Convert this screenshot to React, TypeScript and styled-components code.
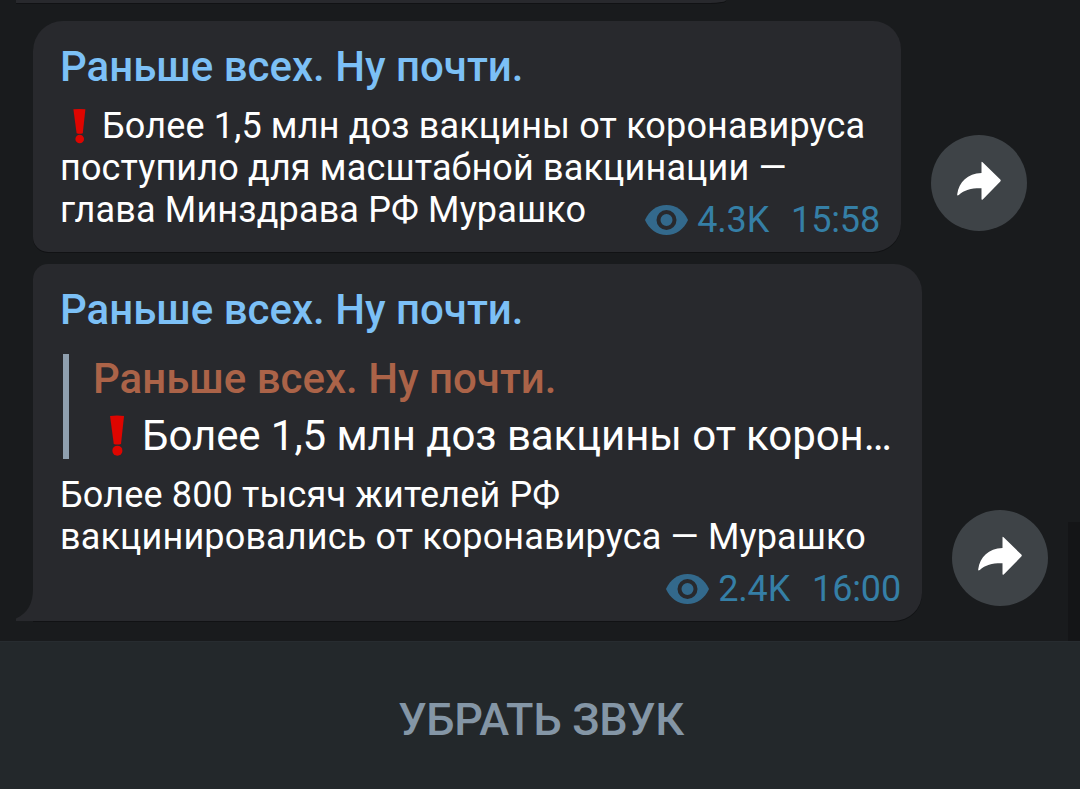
import styled, { createGlobalStyle } from "styled-components";

interface Message {
	id: number;
	lines: string[];
	alert?: boolean;
	quote?: string;
	views: string;
	time: string;
	width: number;
	radius: string;
	shareOffset: number;
	last?: boolean;
}

const author = "Раньше всех. Ну почти.";

const messages: Message[] = [
	{
		id: 1,
		alert: true,
		lines: ["Более 1,5 млн доз вакцины от коронавируса", "поступило для масштабной вакцинации —", "глава Минздрава РФ Мурашко"],
		views: "4.3K",
		time: "15:58",
		width: 868,
		radius: "30px 28px 28px 15px",
		shareOffset: 21,
	},
	{
		id: 2,
		quote: "Более 1,5 млн доз вакцины от корон…",
		lines: ["Более 800 тысяч жителей РФ", "вакцинировались от коронавируса — Мурашко"],
		views: "2.4K",
		time: "16:00",
		width: 889,
		radius: "15px 28px 28px 0",
		shareOffset: 15,
		last: true,
	},
];

const GlobalStyle = createGlobalStyle`
	* {
		box-sizing: border-box;
	}

	body {
		margin: 0;
		background: #191b1d;
	}
`;

const Screen = styled.main`
	display: flex;
	flex-direction: column;
	width: 1080px;
	height: 789px;
	overflow: hidden;
	font-family: Roboto, "Liberation Sans", sans-serif;
`;

const Chat = styled.section`
	position: relative;
	display: flex;
	flex-direction: column;
	gap: 12px;
	height: 641px;
	background: #191b1d;
`;

const PreviousBubble = styled.div`
	width: 710px;
	height: 3px;
	margin: 0 0 6px 16px;
	background: #28292d;
	border-bottom-right-radius: 16px 3px;
	box-shadow: 0 1px 0 #111214;
`;

const ScrollShade = styled.div`
	position: absolute;
	right: 0;
	bottom: 0;
	width: 12px;
	height: 119px;
	background: #141517;
`;

const MessageRow = styled.div`
	display: flex;
	align-items: flex-end;
	gap: 30px;
	padding-left: 33px;
`;

const Bubble = styled.article<{ $width: number; $radius: string }>`
	position: relative;
	width: ${({ $width }) => $width}px;
	padding: 21px 21px 11px 27px;
	background: #28292d;
	border-radius: ${({ $radius }) => $radius};
	box-shadow: 0 1px 0 #111214;
`;

const Tail = styled.svg`
	position: absolute;
	left: -17px;
	bottom: 0;
	width: 18px;
	height: 32px;
`;

const Author = styled.h2<{ $quoted?: boolean }>`
	margin: 0;
	height: 49px;
	font-size: 42px;
	font-weight: 500;
	line-height: 49px;
	white-space: nowrap;
	color: ${({ $quoted }) => ($quoted ? "#ab6348" : "#7cc0f6")};
`;

const Quote = styled.blockquote`
	display: flex;
	flex-direction: column;
	gap: 8px;
	height: 105px;
	margin: 20px 0 0 3px;
	padding-left: 24px;
	border-left: 6px solid #8f9fae;
`;

const QuoteText = styled.div`
	display: flex;
	font-size: 42px;
	line-height: 49px;
	letter-spacing: -0.08px;
	white-space: nowrap;
	color: #fff;
`;

const Content = styled.div<{ $stacked?: boolean }>`
	display: grid;
	grid-template-rows: ${({ $stacked }) => ($stacked ? "84px 52px" : "136px")};
	margin-top: ${({ $stacked }) => ($stacked ? 15 : 14)}px;
`;

const Text = styled.div`
	grid-area: 1 / 1;
	font-size: 36px;
	line-height: 42px;
	letter-spacing: 0.15px;
	color: #fff;
`;

const Line = styled.div`
	display: flex;
	white-space: nowrap;
`;

const Meta = styled.div<{ $stacked?: boolean }>`
	grid-area: ${({ $stacked }) => ($stacked ? 2 : 1)} / 1;
	align-self: end;
	justify-self: end;
	display: flex;
	align-items: center;
	font-size: 36px;
	line-height: 42px;
	letter-spacing: -0.15px;
	color: #357fa6;
`;

const Views = styled.span`
	margin: 0 22px 0 9px;
`;

const Mark = styled.svg<{ $large?: boolean }>`
	flex: none;
	width: ${({ $large }) => ($large ? 49 : 42)}px;
	height: ${({ $large }) => ($large ? 49 : 42)}px;
`;

const ShareButton = styled.button<{ $offset: number }>`
	display: flex;
	align-items: center;
	justify-content: center;
	width: 96px;
	height: 96px;
	margin: 0 0 ${({ $offset }) => $offset}px;
	padding: 0 0 4px;
	border: 0;
	border-radius: 50%;
	background: #3e4347;
`;

const MuteBar = styled.button`
	flex: 1;
	padding: 7px 0 0 2px;
	border: 0;
	border-top: 1px solid #272c30;
	background: #23282b;
	color: #8496a6;
	font-family: inherit;
	font-size: 45px;
	font-weight: 500;
	line-height: 53px;
	letter-spacing: -0.3px;
`;

function ExclamationMark({ large }: { large?: boolean }) {
	return (
		<Mark $large={large} viewBox={large ? "-1.2 0 42 42" : "0 0 42 42"} fill='#de0500'>
			<path d='M13.4 4.3Q19.4 3.5 25.4 4.3L22.8 28.2Q19.6 29.3 16.6 28.2Z' />
			<circle cx='19.7' cy='34' r='4.3' />
		</Mark>
	);
}

function EyeIcon() {
	return (
		<svg width='43' height='30' viewBox='0 0 43 30' fill='none'>
			<path d='M0 15C4 5.8 12 0 21.5 0S39 5.8 43 15C39 24.2 31 30 21.5 30S4 24.2 0 15Z' fill='#33698c' />
			<circle cx='21.5' cy='15' r='8' stroke='#28292d' strokeWidth='4' />
		</svg>
	);
}

function ShareIcon() {
	return (
		<svg width='46' height='40' viewBox='0 0 46 40' fill='#fff'>
			<path d='M25.5 1.6Q25.5 .3 26.6 1.2L44.3 18.6Q45.3 19.6 44.3 20.6L27 38.3Q25.5 39.5 25.5 38V27.2C16 27 8.5 28.5 2.8 34Q1 35.3 1.2 33.2C3 20.8 11.5 12.7 25.5 12Z' />
		</svg>
	);
}

export default function App() {
	return (
		<Screen>
			<GlobalStyle />
			<Chat>
				<PreviousBubble />
				{messages.map((message) => (
					<MessageRow key={message.id}>
						<Bubble $width={message.width} $radius={message.radius}>
							{message.last && (
								<Tail viewBox='0 0 18 32' fill='#28292d'>
									<path d='M18 0H17C17 14 12 24 0 29.5V32H18Z' />
								</Tail>
							)}
							<Author>{author}</Author>
							{message.quote && (
								<Quote>
									<Author $quoted>{author}</Author>
									<QuoteText>
										<ExclamationMark large />
										<span>{message.quote}</span>
									</QuoteText>
								</Quote>
							)}
							<Content $stacked={message.last}>
								<Text>
									{message.lines.map((line, index) => (
										<Line key={line}>
											{message.alert && index === 0 && <ExclamationMark />}
											<span>{line}</span>
										</Line>
									))}
								</Text>
								<Meta $stacked={message.last}>
									<EyeIcon />
									<Views>{message.views}</Views>
									<span>{message.time}</span>
								</Meta>
							</Content>
						</Bubble>
						<ShareButton $offset={message.shareOffset} aria-label='Поделиться'>
							<ShareIcon />
						</ShareButton>
					</MessageRow>
				))}
				<ScrollShade />
			</Chat>
			<MuteBar>УБРАТЬ ЗВУК</MuteBar>
		</Screen>
	);
}
